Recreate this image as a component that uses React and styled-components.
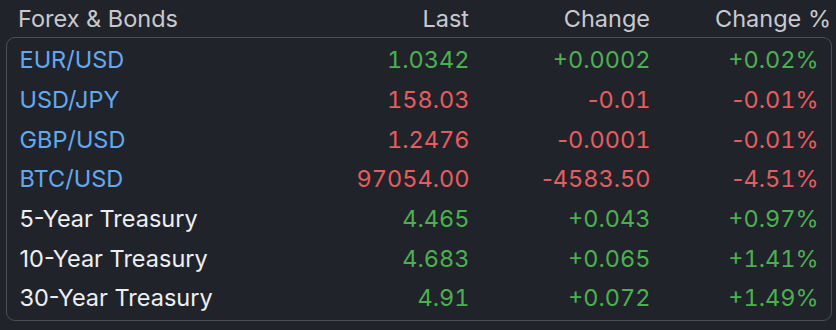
import styled, { createGlobalStyle } from "styled-components";

const GlobalStyle = createGlobalStyle`
  html, body {
    margin: 0;
    padding: 0;
    background: #21232b;
  }
  body {
    font-family: Inter, "Noto Sans", sans-serif;
    -webkit-font-smoothing: antialiased;
  }
`;

const rows = [
  { name: "EUR/USD", link: true, last: "1.0342", change: "+0.0002", pct: "+0.02%", up: true },
  { name: "USD/JPY", link: true, last: "158.03", change: "-0.01", pct: "-0.01%", up: false },
  { name: "GBP/USD", link: true, last: "1.2476", change: "-0.0001", pct: "-0.01%", up: false },
  { name: "BTC/USD", link: true, last: "97054.00", change: "-4583.50", pct: "-4.51%", up: false },
  { name: "5-Year Treasury", last: "4.465", change: "+0.043", pct: "+0.97%", up: true },
  { name: "10-Year Treasury", last: "4.683", change: "+0.065", pct: "+1.41%", up: true },
  { name: "30-Year Treasury", last: "4.91", change: "+0.072", pct: "+1.49%", up: true },
];

const Panel = styled.div`
  width: 836px;
  height: 330px;
  box-sizing: border-box;
  padding: 0 4px 0 6px;
  font-size: 23.5px;
`;

const Header = styled.div`
  display: grid;
  grid-template-columns: 1fr 150px 181px 181px;
  height: 38px;
  align-items: center;
  padding: 0 1px 0 12px;
  color: #c9cacf;
  margin-top: -1px;
`;

const HeadCell = styled.div`
  text-align: ${(p) => (p.$left ? "left" : "right")};
`;

const Box = styled.div`
  border: 1.5px solid #4b4d59;
  border-radius: 9px;
  padding: 2px 12.5px 2px;
`;

const Row = styled.div`
  display: grid;
  grid-template-columns: 1fr 150px 181px 168px;
  height: 39.7px;
  align-items: center;
`;

const Name = styled.div`
  color: ${(p) => (p.$link ? "#63a9f0" : "#eeeff1")};
`;

const Value = styled.div`
  text-align: right;
  font-feature-settings: "tnum";
  color: ${(p) => (p.$up ? "#4cb050" : "#e65c5f")};
`;

const Minus = styled.span`
  font-feature-settings: "tnum" 0;
`;

const Num = ({ text, up }) =>
  text.startsWith("-") ? (
    <Value $up={up}>
      <Minus>-</Minus>
      {text.slice(1)}
    </Value>
  ) : (
    <Value $up={up}>{text}</Value>
  );

export default function App() {
  return (
    <>
      <GlobalStyle />
      <Panel>
        <Header>
          <HeadCell $left>Forex &amp; Bonds</HeadCell>
          <HeadCell>Last</HeadCell>
          <HeadCell>Change</HeadCell>
          <HeadCell>Change %</HeadCell>
        </Header>
        <Box>
          {rows.map((r) => (
            <Row key={r.name}>
              <Name $link={r.link}>{r.name}</Name>
              <Num text={r.last} up={r.up} />
              <Num text={r.change} up={r.up} />
              <Num text={r.pct} up={r.up} />
            </Row>
          ))}
        </Box>
      </Panel>
    </>
  );
}
